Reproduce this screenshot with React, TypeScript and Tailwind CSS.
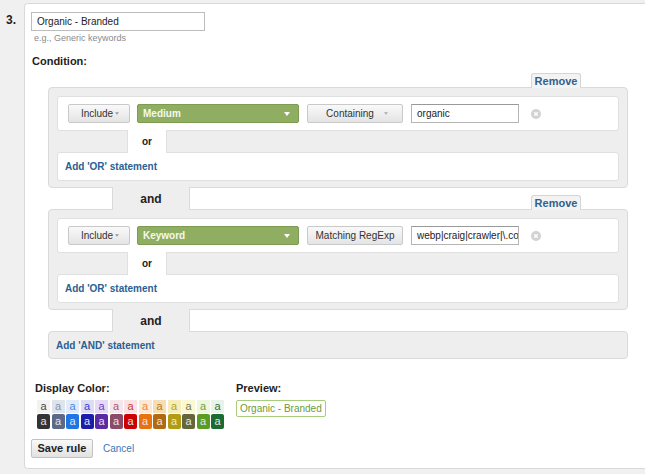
import React from "react";

type Swatch = { bg: string; fg: string };

const lightSwatches: Swatch[] = [
  { bg: "bg-[#f2f2f2]", fg: "text-[#444444]" },
  { bg: "bg-[#dfe3ec]", fg: "text-[#8593b3]" },
  { bg: "bg-[#dfeafa]", fg: "text-[#4a86e8]" },
  { bg: "bg-[#dcdcf5]", fg: "text-[#3b3bc8]" },
  { bg: "bg-[#e4daf6]", fg: "text-[#6b3fc0]" },
  { bg: "bg-[#f6e6ec]", fg: "text-[#a55675]" },
  { bg: "bg-[#fbe1e1]", fg: "text-[#cc3a3a]" },
  { bg: "bg-[#fde8d6]", fg: "text-[#e8873a]" },
  { bg: "bg-[#f6ddb4]", fg: "text-[#b57822]" },
  { bg: "bg-[#f7edb8]", fg: "text-[#b3a228]" },
  { bg: "bg-[#fbf9d3]", fg: "text-[#7a7445]" },
  { bg: "bg-[#eef6dd]", fg: "text-[#6fa23e]" },
  { bg: "bg-[#e8f3ea]", fg: "text-[#2b7443]" },
];

const darkSwatches: string[] = [
  "bg-[#333333]",
  "bg-[#5b6a8a]",
  "bg-[#1f74e6]",
  "bg-[#1d1dab]",
  "bg-[#5a2ba3]",
  "bg-[#8a4b6b]",
  "bg-[#cc0000]",
  "bg-[#e9720c]",
  "bg-[#b06b12]",
  "bg-[#b39c12]",
  "bg-[#66663b]",
  "bg-[#5c9c22]",
  "bg-[#1b6c32]",
];

function Caret({ className }: { className: string }) {
  return (
    <svg viewBox="0 0 6 4" className={className}>
      <path d="M0 0h6L3 4z" fill="currentColor" />
    </svg>
  );
}

function ClearIcon() {
  return (
    <svg viewBox="0 0 10 10" className="ml-[12px] h-[10px] w-[10px]">
      <circle cx="5" cy="5" r="5" fill="#d2d2d2" />
      <path d="M3.2 3.2l3.6 3.6M6.8 3.2l-3.6 3.6" stroke="#fff" strokeWidth="1.3" />
    </svg>
  );
}

function GrayButton({ children, w }: { children: React.ReactNode; w: string }) {
  return (
    <div
      className={`${w} flex h-[19px] items-center justify-center rounded-[2px] border border-[#c9c9c9] bg-gradient-to-b from-[#f9f9f9] to-[#e4e4e4] text-[10px] text-[#333]`}
    >
      {children}
    </div>
  );
}

function ConditionRow({ field, match, value }: { field: string; match: string; value: string }) {
  return (
    <div className="flex h-[35px] items-center rounded-[3px] border border-[#e0e0e0] bg-white pl-[10px]">
      <GrayButton w="w-[62px]">
        <span className="ml-[2px]">Include</span>
        <Caret className="ml-[2px] h-[3px] w-[4px] text-[#999]" />
      </GrayButton>
      <div className="ml-[7px] flex h-[19px] w-[162px] items-center justify-between rounded-[2px] border border-[#7d9b52] bg-[#8fae62] pl-[5px] pr-[8px] text-[10px] font-bold text-[#f4f8ee]">
        {field}
        <Caret className="h-[4px] w-[6px] text-white" />
      </div>
      <div className="ml-[8px]">
        {match === "Containing" ? (
          <GrayButton w="w-[96px]">
            <span className="ml-[4px]">Containing</span>
            <Caret className="ml-[10px] h-[3px] w-[4px] text-[#aaa]" />
          </GrayButton>
        ) : (
          <GrayButton w="w-[96px]">{match}</GrayButton>
        )}
      </div>
      <div className="ml-[8px] h-[19px] w-[108px] overflow-hidden whitespace-nowrap border border-[#b5b5b5] border-t-[#999] bg-white pl-[5px] text-[10px] leading-[17px] text-[#222]">
        {value}
      </div>
      <ClearIcon />
    </div>
  );
}

function Block({ field, match, value }: { field: string; match: string; value: string }) {
  return (
    <div className="relative rounded-[4px] border border-[#dadada] bg-[#eeeeee] px-[8px] pb-[6px] pt-[8px]">
      <div className="absolute right-[46px] top-[-15px] flex h-[15px] w-[50px] items-center justify-center rounded-t-[3px] border border-b-0 border-[#d5d5d5] bg-[#f3f3f3] text-[11px] font-bold text-[#2e6190]">
        Remove
      </div>
      <ConditionRow field={field} match={match} value={value} />
      <div className="flex h-[21px]">
        <div className="w-[70px]" />
        <div className="relative z-10 -my-px flex w-[40px] items-center justify-center border-x border-[#e0e0e0] bg-white text-[10px] font-bold text-[#222]">
          or
        </div>
        <div className="flex-1" />
      </div>
      <div className="flex h-[29px] items-center rounded-[3px] border border-[#e0e0e0] bg-white pl-[7px] text-[10px] font-bold text-[#2a5f92]">
        Add 'OR' statement
      </div>
    </div>
  );
}

function AndJoin() {
  return (
    <div className="flex h-[21px]">
      <div className="w-[64px]" />
      <div className="relative z-10 -my-px flex w-[78px] items-center justify-center border-x border-[#dadada] bg-[#eeeeee] text-[12px] font-bold text-[#222]">
        and
      </div>
      <div className="flex-1" />
    </div>
  );
}

export default function App() {
  return (
    <div className="flex h-[474px] w-[645px] overflow-hidden bg-[#f0f0f0] font-['Liberation_Sans',Arial,sans-serif] text-[#222]">
      <div className="w-[24px] shrink-0 pl-[6px] pt-[11px] text-[12px] font-bold">3.</div>

      <div className="mb-[5px] mt-[3px] flex-1 rounded-l-[4px] border border-r-0 border-[#d9d9d9] bg-white pl-[6px] pr-[17px] pt-[8px]">
        <div className="h-[19px] w-[174px] border border-[#bdbdbd] pl-[5px] text-[10px] leading-[17px]">
          Organic - Branded
        </div>
        <div className="mt-[1px] pl-[3px] text-[9px] leading-[12px] text-[#8a8a8a]">e.g., Generic keywords</div>
        <div className="mt-[10px] pl-[1px] text-[11px] font-bold leading-[14px]">Condition:</div>

        <div className="ml-[17px] mt-[19px]">
          <Block field="Medium" match="Containing" value="organic" />
          <AndJoin />
          <Block field="Keyword" match="Matching RegExp" value="webp|craig|crawler|\.com" />
          <AndJoin />
          <div className="flex h-[28px] items-center rounded-[4px] border border-[#dadada] bg-[#eeeeee] pl-[7px] text-[10px] font-bold text-[#2a5f92]">
            Add 'AND' statement
          </div>
        </div>

        <div className="mt-[22px] flex">
          <div className="w-[205px] pl-[4px]">
            <div className="text-[11px] font-bold leading-[14px]">Display Color:</div>
            <div className="mt-[5px] flex gap-[1.5px] pl-[2px]">
              {lightSwatches.map((s, i) => (
                <div
                  key={i}
                  className={`${s.bg} ${s.fg} flex h-[13px] w-[13px] items-center justify-center text-[11px] leading-none`}
                >
                  a
                </div>
              ))}
            </div>
            <div className="mt-[1px] flex gap-[1.5px] pl-[2px]">
              {darkSwatches.map((bg, i) => (
                <div
                  key={i}
                  className={`${bg} flex h-[15px] w-[13px] items-center justify-center rounded-[2px] text-[11px] leading-none text-[#e6e6e6]`}
                >
                  a
                </div>
              ))}
            </div>
          </div>
          <div>
            <div className="text-[11px] font-bold leading-[14px]">Preview:</div>
            <div className="mt-[5px] inline-flex h-[17px] items-center rounded-[2px] border border-[#a8cc7e] px-[3px] text-[10px] text-[#6a9c3a]">
              Organic - Branded
            </div>
          </div>
        </div>

        <div className="mt-[10px] flex items-center">
          <div className="flex h-[19px] w-[62px] items-center justify-center rounded-[2px] border border-[#c2c2c2] bg-gradient-to-b from-[#f9f9f9] to-[#e2e2e2] text-[11px] font-bold text-[#222]">
            Save rule
          </div>
          <span className="ml-[10px] text-[10px] text-[#3b78b5]">Cancel</span>
        </div>
      </div>
    </div>
  );
}
